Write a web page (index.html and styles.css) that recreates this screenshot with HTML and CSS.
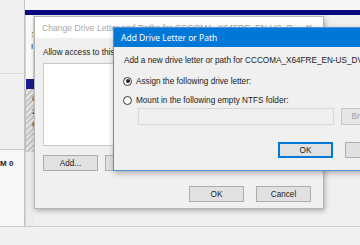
FILE: index.html
```html
<!DOCTYPE html>
<html>
<head>
<meta charset="utf-8">
<link rel="stylesheet" href="styles.css">
</head>
<body>
<div class="dm">
  <div class="leftcol">
    <div class="lc-top"></div>
    <div class="lc-mid"></div>
    <div class="lc-bot"><span class="disk">M 0</span></div>
  </div>
  <div class="main">
    <div class="topstrip"></div>
    <div class="navy"></div>
    <div class="strip">
      <div class="s-white"><span>1</span><span>H</span></div>
      <div class="s-block"></div>
      <div class="s-hatch"><span>C</span><span>2</span><span>H</span></div>
      <div class="s-low"></div>
    </div>
  </div>
</div>

<div class="dlg back">
  <div class="btitle">
    <span class="btext">Change Drive Letter and Paths for CCCOMA_X64FRE_EN-US_D...</span>
    <span class="bx">✕</span>
  </div>
  <div class="bbody">
    <div class="label">Allow access to this volume by using the following drive letter and paths:</div>
    <div class="listbox"></div>
    <div class="brow">
      <div class="btn">Add...</div>
      <div class="btn">Change...</div>
      <div class="btn">Remove</div>
    </div>
    <div class="brow right">
      <div class="btn">OK</div>
      <div class="btn">Cancel</div>
    </div>
  </div>
</div>

<div class="dlg front">
  <div class="ftitle">Add Drive Letter or Path</div>
  <div class="fbody">
    <div class="label">Add a new drive letter or path for CCCOMA_X64FRE_EN-US_DV5.</div>
    <div class="radio"><span class="rc on"></span>Assign the following drive letter:</div>
    <div class="radio r2"><span class="rc"></span>Mount in the following empty NTFS folder:</div>
    <div class="frow">
      <div class="field"></div>
      <div class="btn dis">Browse...</div>
    </div>
    <div class="frow okrow">
      <div class="btn def">OK</div>
      <div class="btn">Cancel</div>
    </div>
  </div>
</div>
</body>
</html>
```

FILE: styles.css
```css
html, body {
  margin: 0;
  padding: 0;
}
body {
  width: 360px;
  height: 245px;
  overflow: hidden;
  position: relative;
  background: #f0f0f0;
  font-family: "Liberation Sans", Arial, sans-serif;
  font-size: 8.2px;
  color: #1a1a1a;
}
.dm {
  display: grid;
  grid-template-columns: 25px 1fr;
  height: 227px;
  border-bottom: 1px solid #cdcdcd;
  box-sizing: border-box;
}
.leftcol {
  display: flex;
  flex-direction: column;
  border-right: 1px solid #c4c4c4;
}
.lc-top {
  height: 73px;
  border-bottom: 1px solid #d8d8d8;
  background: #f0f0f0;
}
.lc-mid {
  height: 75px;
  border-bottom: 1px solid #c8c8c8;
  background: #f0f0f0;
}
.lc-bot {
  flex: 1;
  background: #f7f7f7;
  padding-top: 9px;
}
.disk {
  font-weight: bold;
  font-size: 8px;
  color: #222;
  display: block;
  white-space: nowrap;
}
.main {
  display: flex;
  flex-direction: column;
}
.topstrip {
  height: 10px;
  background: #f6f6f6;
}
.navy {
  height: 5px;
  background: #0a0a80;
}
.strip {
  flex: 1;
  width: 9px;
  display: flex;
  flex-direction: column;
}
.s-white {
  height: 64px;
  background: #fafafa;
  border-left: 1px solid #cfcfcf;
  border-right: 1px solid #d8d8d8;
  box-sizing: border-box;
  display: flex;
  flex-direction: column;
  align-items: flex-end;
  padding-top: 15px;
  gap: 2px;
  overflow: hidden;
}
.s-white span, .s-hatch span {
  width: 2px;
  overflow: hidden;
  line-height: 10px;
  font-size: 8px;
  color: #333;
}
.s-block {
  height: 10px;
  background: #1a1a8a;
  margin-left: 1px;
}
.s-hatch {
  height: 58px;
  background: repeating-linear-gradient(135deg, #c8c8c8 0 2px, #e4e4e4 2px 4px);
  border-left: 1px solid #bcbcbc;
  display: flex;
  flex-direction: column;
  align-items: flex-end;
  gap: 3px;
  padding-top: 5px;
  overflow: hidden;
}
.s-low {
  flex: 1;
  background: #ececec;
  border-left: 1px solid #d4d4d4;
}

.dlg {
  position: absolute;
  box-sizing: border-box;
  display: flex;
  flex-direction: column;
}
.back {
  left: 34px;
  top: 16px;
  width: 290px;
  height: 193px;
  background: #f0f0f0;
  border: 1px solid #b4b4b4;
  box-shadow: 1px 2px 5px rgba(0,0,0,0.28);
}
.btitle {
  height: 21px;
  background: #ffffff;
  display: flex;
  align-items: center;
  padding-left: 7px;
  padding-right: 8px;
  color: #a8a8a8;
  font-size: 8.6px;
  flex-shrink: 0;
}
.btext {
  flex: 1;
  white-space: nowrap;
  overflow: hidden;
}
.bx {
  font-size: 9px;
  color: #999;
  margin-left: 6px;
  margin-right: 2px;
}
.bbody {
  padding: 10px 8px 0 8px;
  display: flex;
  flex-direction: column;
}
.label {
  line-height: 10px;
  white-space: nowrap;
}
.bbody .label {
  overflow: hidden;
}
.listbox {
  margin-top: 5px;
  height: 83px;
  background: #ffffff;
  border: 1px solid #c8c8c8;
  box-sizing: border-box;
}
.brow {
  display: flex;
  gap: 7px;
  margin-top: 9px;
}
.brow.right {
  justify-content: flex-end;
  gap: 12px;
  margin-top: 15px;
  margin-right: 4px;
}
.btn {
  width: 55px;
  height: 16px;
  box-sizing: border-box;
  background: #e1e1e1;
  border: 1px solid #adadad;
  display: flex;
  align-items: center;
  justify-content: center;
  font-size: 8.2px;
  color: #1a1a1a;
  flex-shrink: 0;
}

.front {
  left: 113px;
  top: 27px;
  width: 260px;
  height: 144px;
  background: #f0f0f0;
  border: 1px solid #4d93d9;
  box-shadow: 1px 2px 6px rgba(0,0,0,0.3);
}
.ftitle {
  height: 19px;
  background: #0078d7;
  color: #ffffff;
  display: flex;
  align-items: center;
  padding-left: 7px;
  font-family: "Noto Sans", "Liberation Sans", sans-serif;
  font-size: 8.5px;
  flex-shrink: 0;
}
.fbody {
  padding: 9px 0 0 9px;
  display: flex;
  flex-direction: column;
}
.fbody .label {
  padding-left: 1px;
}
.radio {
  display: flex;
  align-items: center;
  height: 10px;
  margin-top: 10px;
  white-space: nowrap;
}
.radio.r2 {
  margin-top: 9px;
}
.rc {
  width: 9px;
  height: 9px;
  box-sizing: border-box;
  border: 1px solid #333;
  border-radius: 50%;
  background: #fff;
  margin-right: 4px;
  position: relative;
  flex-shrink: 0;
}
.rc.on::after {
  content: "";
  position: absolute;
  left: 1.5px;
  top: 1.5px;
  width: 4px;
  height: 4px;
  border-radius: 50%;
  background: #222;
}
.frow {
  display: flex;
  margin-top: 3px;
  margin-left: 15px;
  gap: 7px;
}
.field {
  width: 196px;
  height: 17px;
  flex-shrink: 0;
  box-sizing: border-box;
  background: #f0f0f0;
  border: 1px solid #d6d6d6;
}
.btn.dis {
  height: 17px;
  color: #a0a0a0;
  background: #e6e6e6;
  border-color: #c6c6c6;
}
.okrow {
  margin-top: 17px;
  margin-left: 155px;
  gap: 12px;
}
.btn.def {
  border: 1px solid #0078d7;
  box-shadow: inset 0 0 0 1px #0078d7;
}
```
